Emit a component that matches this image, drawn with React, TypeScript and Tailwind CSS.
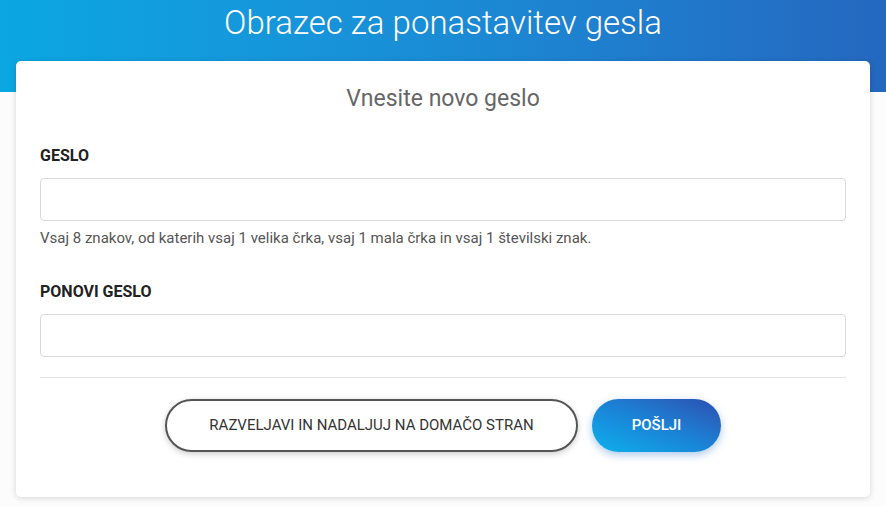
export default function App() {
  return (
    <div className="relative min-h-screen bg-[#fcfcfc] font-['Roboto',sans-serif]">
      <header className="h-[92px] bg-gradient-to-r from-[#0aa7e2] via-[#1a8cd6] to-[#2468c0] pt-[1px]">
        <h1 className="text-center text-[33px] font-light leading-[44px] text-white">
          Obrazec za ponastavitev gesla
        </h1>
      </header>

      <main className="relative mx-[16px] -mt-[31px] rounded-[5px] bg-white px-[24px] pb-[45px] pt-[23px] shadow-[0_1px_6px_rgba(0,0,0,0.16)]">
        <h2 className="text-center text-[23px] leading-[30px] text-[#666]">Vnesite novo geslo</h2>

        <form className="mt-[32px] flex flex-col">
          <label className="text-[16px] font-bold leading-[20px] text-[#222]">GESLO</label>
          <input
            type="password"
            className="mt-[12px] h-[43px] rounded-[4px] border border-[#d9d9d9] px-3 outline-none"
          />
          <p className="mt-[8px] text-[15px] leading-[18px] text-[#555]">
            Vsaj 8 znakov, od katerih vsaj 1 velika črka, vsaj 1 mala črka in vsaj 1 številski znak.
          </p>

          <label className="mt-[35px] text-[16px] font-bold leading-[20px] text-[#222]">PONOVI GESLO</label>
          <input
            type="password"
            className="mt-[12px] h-[43px] rounded-[4px] border border-[#d9d9d9] px-3 outline-none"
          />

          <div className="mt-[20px] border-t border-[#e5e5e5]" />

          <div className="mt-[21px] flex justify-center gap-[14px]">
            <button
              type="button"
              className="h-[53px] w-[413px] rounded-full border-2 border-[#555] bg-white text-[15px] text-[#333] shadow-[0_2px_6px_rgba(0,0,0,0.2)]"
            >
              RAZVELJAVI IN NADALJUJ NA DOMAČO STRAN
            </button>
            <button
              type="button"
              className="h-[53px] w-[129px] rounded-full bg-gradient-to-tr from-[#0bb0ec] via-[#1a83d6] to-[#2a4fb0] text-[15px] font-medium text-white shadow-[0_3px_8px_rgba(20,100,200,0.35)]"
            >
              POŠLJI
            </button>
          </div>
        </form>
      </main>
    </div>
  );
}
